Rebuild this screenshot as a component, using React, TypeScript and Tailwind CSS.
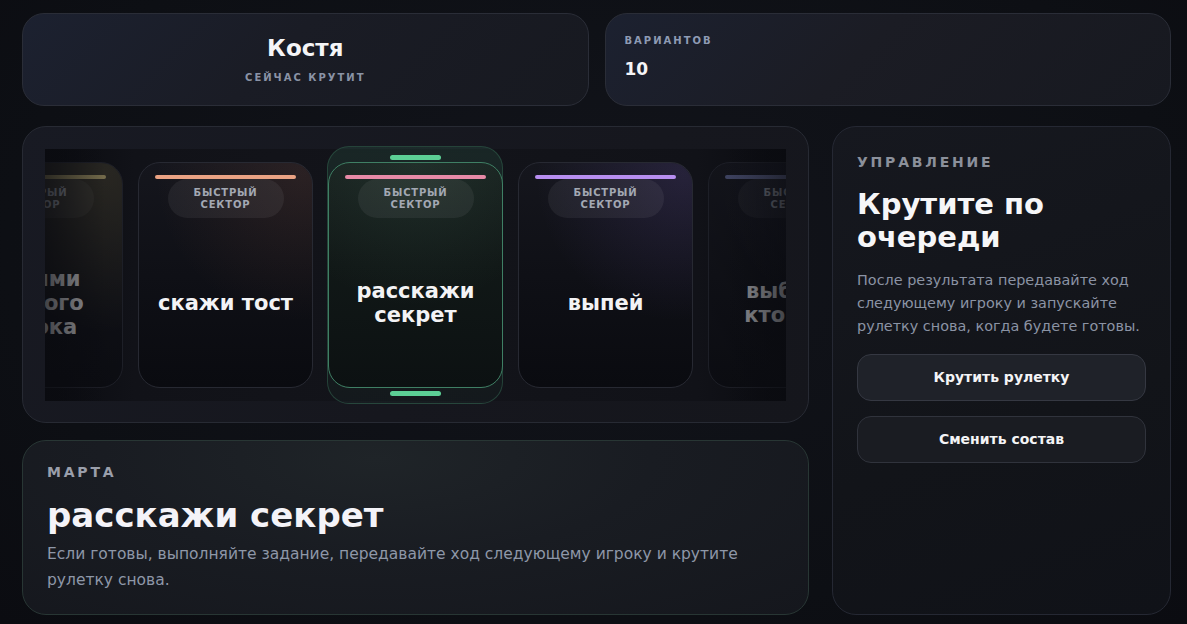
import React from "react";

type Face = {
  text: React.ReactNode;
  bar: string;
  glow: string;
  dim?: boolean;
};

function CardFace({ f, active }: { f: Face; active?: boolean }) {
  return (
    <div
      className={
        "relative flex h-[226px] w-[175px] shrink-0 flex-col items-center overflow-hidden rounded-[22px] border " +
        (active
          ? "border-[#3f7f64] bg-[linear-gradient(180deg,#18211f_0%,#111817_45%,#0c1112_100%)]"
          : "border-[#272932] bg-[linear-gradient(180deg,#15161d_0%,#0f1016_50%,#0a0b10_100%)]") +
        (f.dim ? " opacity-60" : "")
      }
    >
      <div className={"pointer-events-none absolute inset-0 " + f.glow} />
      <div className={"relative mt-[12px] h-[4px] w-[141px] rounded-full " + f.bar} />
      <div className="relative flex h-[39px] w-[116px] flex-col items-center justify-center rounded-full bg-white/[0.06] text-[10px] font-bold leading-[12px] tracking-[0.08em] text-[#a3a8b3]">
        <span>БЫСТРЫЙ</span>
        <span>СЕКТОР</span>
      </div>
      <div className="relative flex flex-1 items-center justify-center px-[8px] text-center text-[21px] font-bold leading-[24px] text-[#f3f3f5]">
        <span>{f.text}</span>
      </div>
    </div>
  );
}

export default function App() {
  const faces: Face[] = [
    {
      text: (
        <>
          ролями
          <br />
          другого
          <br />
          игрока
        </>
      ),
      bar: "bg-[linear-gradient(90deg,#6f6845,#b9a970)]",
      glow: "bg-[radial-gradient(circle_at_90%_5%,rgba(190,170,90,0.22),transparent_60%)]",
      dim: true,
    },
    {
      text: "скажи тост",
      bar: "bg-[#eaa283]",
      glow: "bg-[radial-gradient(circle_at_95%_5%,rgba(190,110,80,0.13),transparent_55%)]",
    },
    {
      text: (
        <>
          расскажи
          <br />
          секрет
        </>
      ),
      bar: "bg-[#e78aa7]",
      glow: "bg-[radial-gradient(circle_at_50%_0%,rgba(110,170,140,0.10),transparent_60%)]",
    },
    {
      text: "выпей",
      bar: "bg-[#b78ef0]",
      glow: "bg-[radial-gradient(circle_at_95%_5%,rgba(130,100,210,0.16),transparent_55%)]",
    },
    {
      text: (
        <>
          выбери,
          <br />
          кто пьёт
        </>
      ),
      bar: "bg-[linear-gradient(90deg,#5c6390,#9096c6)]",
      glow: "bg-[radial-gradient(circle_at_90%_5%,rgba(110,110,190,0.14),transparent_55%)]",
      dim: true,
    },
  ];

  return (
    <div className="min-h-screen w-full bg-[radial-gradient(ellipse_at_50%_40%,#12141b_0%,#0d0f14_70%,#0b0c11_100%)] font-['DejaVu_Sans',sans-serif] text-white">
      <div className="flex flex-col gap-[20px] pb-[9px] pl-[22px] pr-[16px] pt-[13px]">
        {/* top row */}
        <div className="grid grid-cols-2 gap-[16px]">
          <div className="flex h-[93px] flex-col items-center justify-center gap-[9px] rounded-[22px] border border-[#2a2d37] bg-[linear-gradient(135deg,#1c2130_0%,#1a1c25_45%,#171920_100%)]">
            <div className="text-[23px] font-bold leading-[28px] text-[#f5f5f7]">Костя</div>
            <div className="text-[10px] font-bold leading-[14px] tracking-[0.2em] text-[#8a93a6]">
              СЕЙЧАС КРУТИТ
            </div>
          </div>
          <div className="flex h-[93px] flex-col gap-[10px] rounded-[22px] border border-[#2a2d37] bg-[linear-gradient(135deg,#1c2130_0%,#1b1c24_45%,#171920_100%)] pl-[19px] pt-[20px]">
            <div className="text-[10px] font-bold leading-[14px] tracking-[0.2em] text-[#8e9bb4]">
              ВАРИАНТОВ
            </div>
            <div className="text-[17px] font-bold leading-[22px] text-[#f5f5f7]">10</div>
          </div>
        </div>

        {/* main */}
        <div className="flex gap-[23px]">
          <div className="flex w-[787px] flex-col gap-[17px]">
            {/* carousel */}
            <div className="h-[297px] rounded-[24px] border border-[#272a33] bg-[linear-gradient(135deg,#181a23_0%,#16171e_60%,#15161c_100%)] px-[22px] py-[19px]">
              <div className="relative h-[258px] overflow-hidden">
                <div className="absolute inset-x-0 bottom-[3px] top-[3px] bg-[linear-gradient(90deg,#0a0b10_0%,#111218_12%,#13141a_50%,#111218_88%,#0a0b10_100%)]" />
                <div className="relative flex h-full items-center justify-center gap-[15px]">
                  <CardFace f={faces[0]} />
                  <CardFace f={faces[1]} />
                  <div className="relative shrink-0">
                    <div className="absolute -bottom-[16px] -left-px -top-[16px] right-0 rounded-[22px] border border-[#2c5444]/70 bg-[linear-gradient(180deg,rgba(60,140,105,0.16),rgba(40,90,70,0.08))]">
                      <div className="mx-auto mt-[8px] h-[5px] w-[51px] rounded-full bg-[#5ccf95]" />
                    </div>
                    <div className="absolute -bottom-[16px] left-0 right-0 flex justify-center">
                      <div className="mb-[8px] h-[5px] w-[51px] rounded-full bg-[#5ccf95]" />
                    </div>
                    <div className="relative">
                      <CardFace f={faces[2]} active />
                    </div>
                  </div>
                  <CardFace f={faces[3]} />
                  <CardFace f={faces[4]} />
                </div>
                <div className="pointer-events-none absolute bottom-[3px] left-0 top-[3px] w-[60px] bg-[linear-gradient(90deg,rgba(10,11,16,0.6),rgba(10,11,16,0))]" />
                <div className="pointer-events-none absolute bottom-[3px] right-0 top-[3px] w-[60px] bg-[linear-gradient(270deg,rgba(10,11,16,0.6),rgba(10,11,16,0))]" />
              </div>
            </div>

            {/* result */}
            <div className="h-[175px] rounded-[24px] border border-[#283634] bg-[radial-gradient(ellipse_at_45%_10%,#1f2428_0%,#191c22_45%,#15171d_100%)] pl-[24px] pt-[22px]">
              <div className="text-[14px] font-bold leading-[18px] tracking-[0.2em] text-[#9a9fab]">
                МАРТА
              </div>
              <div className="mt-[14px] text-[34px] font-bold leading-[40px] text-[#f4f3f8]">
                расскажи секрет
              </div>
              <div className="mt-[6px] w-[740px] text-[15.5px] leading-[26px] text-[#8e97a8]">
                Если готовы, выполняйте задание, передавайте ход следующему игроку и крутите рулетку снова.
              </div>
            </div>
          </div>

          {/* control panel */}
          <div className="flex h-[489px] flex-1 flex-col rounded-[24px] border border-[#252833] bg-[linear-gradient(160deg,#16181f_0%,#121419_60%,#101218_100%)] px-[24px] pt-[26px]">
            <div className="text-[14px] font-bold leading-[18px] tracking-[0.2em] text-[#8b909b]">
              УПРАВЛЕНИЕ
            </div>
            <div className="mt-[17px] text-[29px] font-bold leading-[33px] text-[#f6f6f8]">
              Крутите по
              <br />
              очереди
            </div>
            <div className="mt-[15px] text-[14.4px] leading-[23px] text-[#8b93a4]">
              После результата передавайте ход следующему игроку и запускайте рулетку снова, когда будете готовы.
            </div>
            <button className="mt-[16px] flex h-[47px] w-full items-center justify-center rounded-[14px] border border-[#353842] bg-[#1f2229] text-[14px] font-bold text-[#f4f4f6]">
              Крутить рулетку
            </button>
            <button className="mt-[15px] flex h-[47px] w-full items-center justify-center rounded-[14px] border border-[#30333c] bg-[#1a1c22] text-[14px] font-bold text-[#f4f4f6]">
              Сменить состав
            </button>
          </div>
        </div>
      </div>
    </div>
  );
}
